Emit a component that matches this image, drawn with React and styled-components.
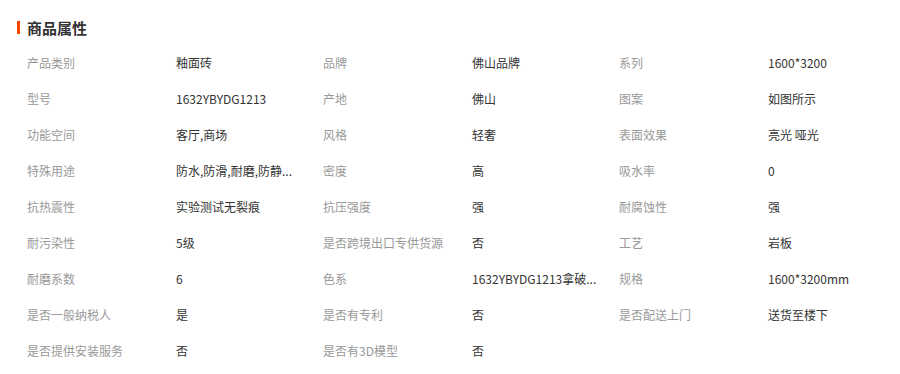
import React from 'react';
import styled, { createGlobalStyle } from 'styled-components';

const GlobalStyle = createGlobalStyle`
  body {
    margin: 0;
    background: #fff;
    font-family: "Microsoft YaHei", "Noto Sans CJK SC", "Noto Sans", sans-serif;
  }
`;

const Panel = styled.div`
  width: 900px;
  padding-top: 16px;
`;

const Title = styled.h3`
  display: flex;
  align-items: center;
  margin: 0 0 7px 17px;
  height: 22px;
  font-size: 15px;
  font-weight: bold;
  color: #333;

  &::before {
    content: '';
    width: 3px;
    height: 13px;
    margin-right: 7px;
    background: #ff4400;
  }
`;

const Grid = styled.dl`
  display: grid;
  grid-template-columns: repeat(3, 149px 147px);
  margin: 0;
  padding-left: 27px;
`;

const Cell = styled.dt`
  height: 36px;
  line-height: 36px;
  margin: 0;
  font-size: 12px;
  color: ${(p) => (p.$value ? '#333' : '#999')};
  white-space: nowrap;
`;

// long values are already shortened the way the page shows them
const attrs = [
  ['产品类别', '釉面砖'],
  ['品牌', '佛山品牌'],
  ['系列', '1600*3200'],
  ['型号', '1632YBYDG1213'],
  ['产地', '佛山'],
  ['图案', '如图所示'],
  ['功能空间', '客厅,商场'],
  ['风格', '轻奢'],
  ['表面效果', '亮光 哑光'],
  ['特殊用途', '防水,防滑,耐磨,防静...'],
  ['密度', '高'],
  ['吸水率', '0'],
  ['抗热震性', '实验测试无裂痕'],
  ['抗压强度', '强'],
  ['耐腐蚀性', '强'],
  ['耐污染性', '5级'],
  ['是否跨境出口专供货源', '否'],
  ['工艺', '岩板'],
  ['耐磨系数', '6'],
  ['色系', '1632YBYDG1213拿破...'],
  ['规格', '1600*3200mm'],
  ['是否一般纳税人', '是'],
  ['是否有专利', '否'],
  ['是否配送上门', '送货至楼下'],
  ['是否提供安装服务', '否'],
  ['是否有3D模型', '否'],
];

export default function App() {
  return (
    <Panel>
      <GlobalStyle />
      <Title>商品属性</Title>
      <Grid>
        {attrs.map(([label, value]) => (
          <React.Fragment key={label}>
            <Cell>{label}</Cell>
            <Cell as="dd" $value>{value}</Cell>
          </React.Fragment>
        ))}
      </Grid>
    </Panel>
  );
}
